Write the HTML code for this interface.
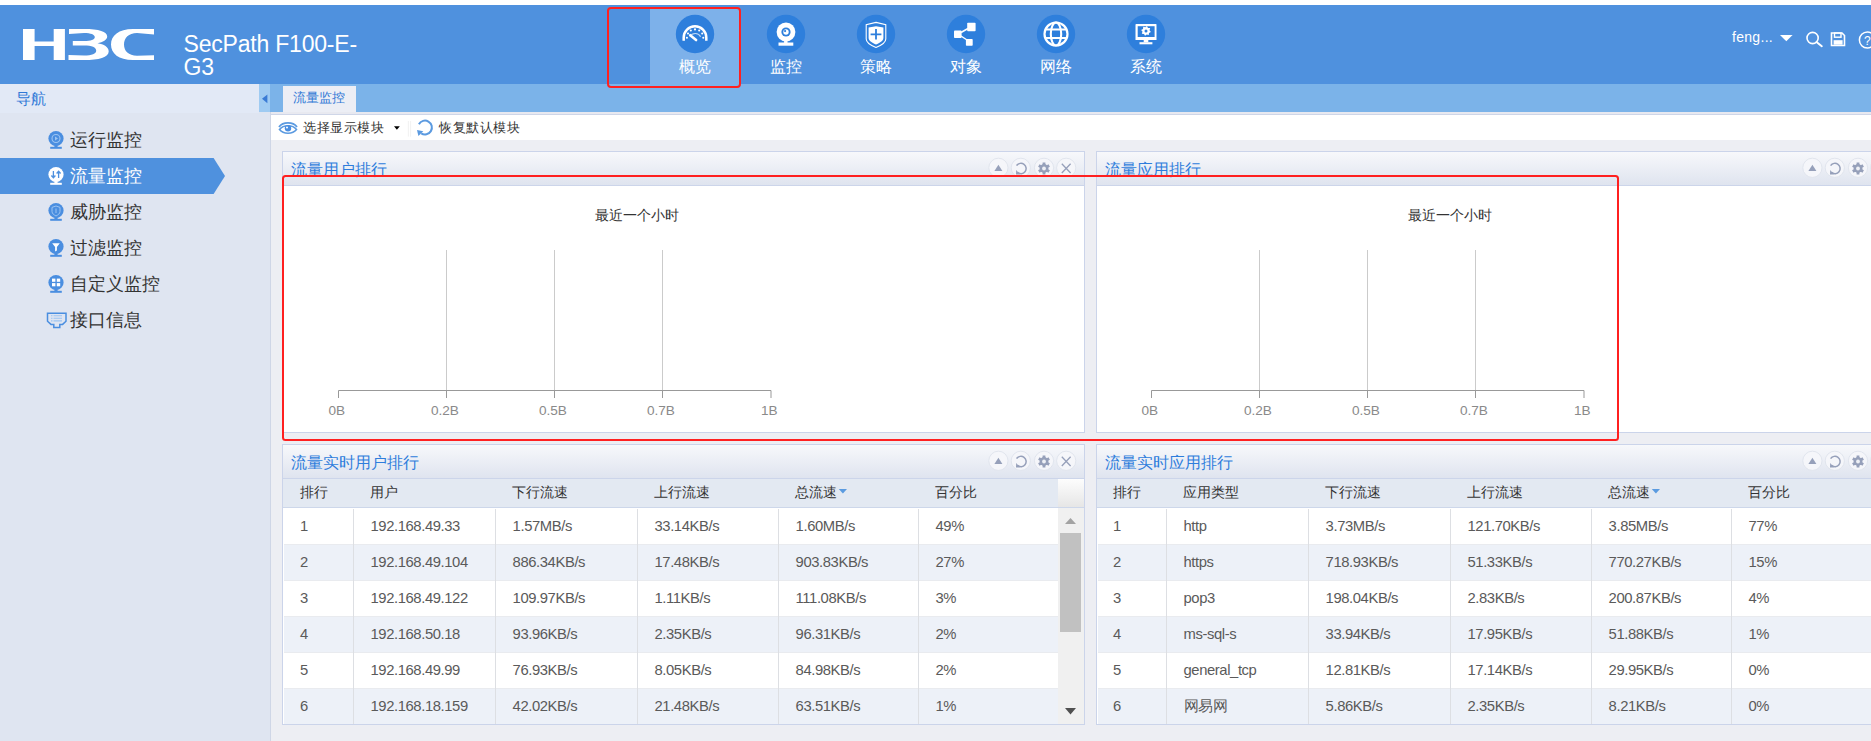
<!DOCTYPE html>
<html><head><meta charset="utf-8"><title>H3C SecPath</title>
<style>
html,body{margin:0;padding:0;}
body{width:1871px;height:741px;overflow:hidden;position:relative;background:#edeef3;font-family:'Liberation Sans', sans-serif;}
</style></head><body>
<div style="position:absolute;left:0;top:0;width:1871px;height:5px;background:#fff"></div>
<div style="position:absolute;left:0;top:5px;width:1871px;height:79px;background:#4f91de"></div>
<svg style="position:absolute;left:0;top:0" width="170" height="84" viewBox="0 0 170 84">
<g fill="#fff">
<path d="M23,29 H34.6 V41.6 H53.7 V29 H64.9 V60 H53.7 V46 H34.6 V60 H23 Z"/>
<path d="M69,29 H84 C99,29 107.2,31.5 107.2,36.6 C107.2,40 103,42.3 97.5,43.3 C104,44.3 108.7,47 108.7,51.5 C108.7,57.5 99,60 84,60 H68.5 V55 L84,55.6 C92,55.6 96.2,53.8 96.2,50.8 C96.2,47.5 92,45.6 84,45.6 H72.8 V41.1 H84 C91,41.1 94.8,39.5 94.8,37 C94.8,34.5 91,32.9 84,32.9 L69,34 Z"/>
<path d="M154,29 L133,29 C118.5,29 111,35.5 111,44.5 C111,53.5 118.5,60 133,60 L154,60 L154,55.2 L137,55.7 C128.5,55.7 124,51 124,44.5 C124,38 128.5,32.9 137,32.9 L154,34.4 Z"/>
</g></svg>
<div style="position:absolute;left:183.5px;top:33px;font-family:'Liberation Sans', sans-serif;font-size:23px;line-height:23px;color:#fff;letter-spacing:-0.2px">SecPath F100-E-<br>G3</div>
<div style="position:absolute;left:650px;top:8px;width:90px;height:76px;background:#7db1ea"></div>
<svg style="position:absolute;left:674.7px;top:14px" width="40" height="40" viewBox="-20 -20 40 40"><circle cx="0" cy="0" r="19.2" fill="#2e7fdc"/><path d="M-11.3,6.8 V3.5 A11.3,11.3 0 0 1 11.3,3.5 V6.8" fill="none" stroke="#fff" stroke-width="2.5"/>
<g fill="#fff"><circle cx="-8.1" cy="3.8" r="1.05"/><circle cx="-7" cy="-0.5" r="1.05"/><circle cx="-4.2" cy="-3.5" r="1.05"/><circle cx="0" cy="-4.6" r="1.05"/><circle cx="4.2" cy="-3.5" r="1.05"/><circle cx="7.2" cy="-0.5" r="1.05"/><circle cx="8.3" cy="3.8" r="1.05"/></g>
<path d="M1.1,6.0 L-4.8,1.2" stroke="#fff" stroke-width="2.6" stroke-linecap="round"/>
<path d="M-5,2.6 A6,6 0 0 1 5.6,2.8" fill="none" stroke="#fff" stroke-width="1.2" opacity="0.7"/></svg>
<div style="position:absolute;left:664.7px;top:58px;width:60px;text-align:center;font-family:'Liberation Sans', sans-serif;font-size:16px;line-height:18px;color:#fff">概览</div>
<svg style="position:absolute;left:765.7px;top:14px" width="40" height="40" viewBox="-20 -20 40 40"><circle cx="0" cy="0" r="19.2" fill="#2e7fdc"/><circle cx="0" cy="-2" r="9.4" fill="#fff"/><circle cx="0" cy="-2" r="4.6" fill="#2e7fdc"/><circle cx="0" cy="-2" r="2.7" fill="#fff"/><circle cx="-0.9" cy="-2.9" r="1.1" fill="#2e7fdc"/>
<rect x="-1.9" y="7" width="3.4" height="2.2" fill="#fff"/><rect x="-7.5" y="8.5" width="14.8" height="3.2" fill="#fff"/></svg>
<div style="position:absolute;left:755.7px;top:58px;width:60px;text-align:center;font-family:'Liberation Sans', sans-serif;font-size:16px;line-height:18px;color:#fff">监控</div>
<svg style="position:absolute;left:855.6px;top:14px" width="40" height="40" viewBox="-20 -20 40 40"><circle cx="0" cy="0" r="19.2" fill="#2e7fdc"/><path d="M0,-11.6 L9.8,-9.4 V5 C9.8,8.5 5,11.5 0,13.5 C-5,11.5 -9.8,8.5 -9.8,5 V-9.4 Z" fill="none" stroke="#fff" stroke-width="1.1"/>
<path d="M0,-7.8 L7.4,-6.4 V4 C7.4,6.8 3.5,9 0,10.5 C-3.5,9 -7.4,6.8 -7.4,4 V-6.4 Z" fill="#fff"/>
<path d="M0,-5 V5.6 M-5.4,0.4 H5.4" stroke="#2e7fdc" stroke-width="1.8"/></svg>
<div style="position:absolute;left:845.6px;top:58px;width:60px;text-align:center;font-family:'Liberation Sans', sans-serif;font-size:16px;line-height:18px;color:#fff">策略</div>
<svg style="position:absolute;left:945.5px;top:14px" width="40" height="40" viewBox="-20 -20 40 40"><circle cx="0" cy="0" r="19.2" fill="#2e7fdc"/><g fill="#fff"><rect x="-12" y="-3.5" width="7.6" height="7.6" rx="0.8"/><rect x="1.2" y="-11.2" width="8.4" height="8.4" rx="0.8"/><rect x="-0.1" y="4.9" width="6.8" height="6.8" rx="0.8"/></g>
<path d="M-5,-1.5 L2,-5.5 M-5,2 L1,6" stroke="#fff" stroke-width="1.5"/></svg>
<div style="position:absolute;left:935.5px;top:58px;width:60px;text-align:center;font-family:'Liberation Sans', sans-serif;font-size:16px;line-height:18px;color:#fff">对象</div>
<svg style="position:absolute;left:1035.6px;top:14px" width="40" height="40" viewBox="-20 -20 40 40"><circle cx="0" cy="0" r="19.2" fill="#2e7fdc"/><circle cx="0" cy="0" r="11.5" fill="none" stroke="#fff" stroke-width="2.2"/>
<ellipse cx="0" cy="0" rx="5.2" ry="11.5" fill="none" stroke="#fff" stroke-width="2.1"/>
<path d="M-10.5,-4.4 H10.5 M-10.5,4 H10.5" stroke="#fff" stroke-width="2"/></svg>
<div style="position:absolute;left:1025.6px;top:58px;width:60px;text-align:center;font-family:'Liberation Sans', sans-serif;font-size:16px;line-height:18px;color:#fff">网络</div>
<svg style="position:absolute;left:1125.5px;top:14px" width="40" height="40" viewBox="-20 -20 40 40"><circle cx="0" cy="0" r="19.2" fill="#2e7fdc"/><path d="M-9.5,-10 H10 A0.8,0.8 0 0 1 10.5,-9.2 V6 H-10.5 V-9.2 A0.8,0.8 0 0 1 -9.5,-10 Z" fill="#fff"/>
<rect x="-8.3" y="-7.8" width="16.9" height="10.8" fill="#2e7fdc"/>
<g transform="translate(0,-3.1)"><polygon points="0.98,-4.90 2.00,-2.99 4.16,-2.78 3.53,-0.70 4.90,0.98 2.99,2.00 2.78,4.16 0.70,3.53 -0.98,4.90 -2.00,2.99 -4.16,2.78 -3.53,0.70 -4.90,-0.98 -2.99,-2.00 -2.78,-4.16 -0.70,-3.53" fill="#fff"/><circle r="1.5" fill="#2e7fdc"/></g>
<rect x="-2.3" y="6" width="4.6" height="2.2" fill="#fff"/><rect x="-6.5" y="8.2" width="12.9" height="2.1" fill="#fff"/></svg>
<div style="position:absolute;left:1115.5px;top:58px;width:60px;text-align:center;font-family:'Liberation Sans', sans-serif;font-size:16px;line-height:18px;color:#fff">系统</div>
<div style="position:absolute;left:1732px;top:28px;font-family:'Liberation Sans', sans-serif;font-size:14px;letter-spacing:0.3px;line-height:18px;color:#fff">feng...</div>
<svg style="position:absolute;left:1770px;top:25px" width="101" height="30" viewBox="1770 25 101 30">
<path d="M1780,35 H1792.6 L1786.3,41.2 Z" fill="#fff"/>
<circle cx="1812.6" cy="38" r="5.6" fill="none" stroke="#fff" stroke-width="1.6"/>
<path d="M1816.5,42 L1821.8,46.2" stroke="#fff" stroke-width="2" stroke-linecap="round"/>
<path d="M1831.5,33 H1842 L1844.5,35.5 V45.5 H1831.5 Z" fill="none" stroke="#fff" stroke-width="1.6"/>
<rect x="1834.5" y="33" width="6.5" height="4.2" fill="none" stroke="#fff" stroke-width="1.4"/>
<rect x="1833.6" y="40.2" width="9" height="4.5" fill="#fff"/>
<circle cx="1867.4" cy="40" r="8" fill="none" stroke="#fff" stroke-width="1.5"/>
<text x="1864" y="45" font-family="Liberation Sans" font-size="12" fill="#fff">?</text>
</svg>
<div style="position:absolute;left:0;top:84px;width:270px;height:657px;background:#dfe5f1"></div>
<div style="position:absolute;left:0;top:84px;width:259px;height:28.5px;background:#e2e9f6"></div>
<div style="position:absolute;left:270px;top:84px;width:1px;height:657px;background:#cfd6e6"></div>
<div style="position:absolute;left:16px;top:90px;font-family:'Liberation Sans', sans-serif;font-size:15px;line-height:18px;color:#2f78d6">导航</div>
<div style="position:absolute;left:259px;top:84px;width:11px;height:28px;background:#9fcbf2"></div>
<svg style="position:absolute;left:259px;top:84px" width="11" height="28"><path d="M3,14.8 L8.4,10.4 V19.2 Z" fill="#3a7bd5"/></svg>
<svg style="position:absolute;left:0;top:158px" width="230" height="36"><path d="M0,0 H213.6 L225,18 L213.6,36 H0 Z" fill="#4f91de"/></svg>
<div style="position:absolute;left:70px;top:129px;font-family:'Liberation Sans', sans-serif;font-size:18px;line-height:22px;color:#333">运行监控</div>
<svg style="position:absolute;left:46px;top:130px" width="22" height="20" viewBox="-10 -10 22 20"><circle cx="0" cy="-1.5" r="7.6" fill="#4a8ee0"/><rect x="-1.6" y="5" width="3.2" height="2" fill="#4a8ee0"/><rect x="-5.8" y="6.8" width="11.6" height="2" fill="#4a8ee0"/><circle cx="0" cy="-1.5" r="4" fill="none" stroke="#9cc4f2" stroke-width="1.1"/><path d="M-1,-3.5 L2,-1.5 L-1,0.5 Z" fill="#9cc4f2"/></svg>
<div style="position:absolute;left:70px;top:165px;font-family:'Liberation Sans', sans-serif;font-size:18px;line-height:22px;color:#fff">流量监控</div>
<svg style="position:absolute;left:46px;top:166px" width="22" height="20" viewBox="-10 -10 22 20"><circle cx="0" cy="-1.5" r="7.6" fill="#fff"/><rect x="-1.6" y="5" width="3.2" height="2" fill="#fff"/><rect x="-5.8" y="6.8" width="11.6" height="2" fill="#fff"/><path d="M-2.6,-5 V1.5 M-4.6,-0.5 L-2.6,1.8 L-0.6,-0.5 M2.6,2 V-4.5 M0.6,-2.5 L2.6,-4.8 L4.6,-2.5" fill="none" stroke="#4f91de" stroke-width="1.3"/></svg>
<div style="position:absolute;left:70px;top:201px;font-family:'Liberation Sans', sans-serif;font-size:18px;line-height:22px;color:#333">威胁监控</div>
<svg style="position:absolute;left:46px;top:202px" width="22" height="20" viewBox="-10 -10 22 20"><circle cx="0" cy="-1.5" r="7.6" fill="#4a8ee0"/><rect x="-1.6" y="5" width="3.2" height="2" fill="#4a8ee0"/><rect x="-5.8" y="6.8" width="11.6" height="2" fill="#4a8ee0"/><path d="M0,-6 L4,-4.6 V-0.5 C4,1.6 2,3 0,4 C-2,3 -4,1.6 -4,-0.5 V-4.6 Z" fill="none" stroke="#9cc4f2" stroke-width="1"/><path d="M0,-3.5 V1" stroke="#9cc4f2" stroke-width="1"/></svg>
<div style="position:absolute;left:70px;top:237px;font-family:'Liberation Sans', sans-serif;font-size:18px;line-height:22px;color:#333">过滤监控</div>
<svg style="position:absolute;left:46px;top:238px" width="22" height="20" viewBox="-10 -10 22 20"><circle cx="0" cy="-1.5" r="7.6" fill="#4a8ee0"/><rect x="-1.6" y="5" width="3.2" height="2" fill="#4a8ee0"/><rect x="-5.8" y="6.8" width="11.6" height="2" fill="#4a8ee0"/><path d="M-3.8,-4.8 H3.8 L0.9,-1 V2.5 L-0.9,3.5 V-1 Z" fill="#fff"/></svg>
<div style="position:absolute;left:70px;top:273px;font-family:'Liberation Sans', sans-serif;font-size:18px;line-height:22px;color:#333">自定义监控</div>
<svg style="position:absolute;left:46px;top:274px" width="22" height="20" viewBox="-10 -10 22 20"><circle cx="0" cy="-1.5" r="7.6" fill="#4a8ee0"/><rect x="-1.6" y="5" width="3.2" height="2" fill="#4a8ee0"/><rect x="-5.8" y="6.8" width="11.6" height="2" fill="#4a8ee0"/><g fill="#fff"><rect x="-4" y="-5.4" width="3.4" height="3.2"/><rect x="0.8" y="-5.4" width="3.4" height="3.2"/><rect x="-4" y="-0.9" width="3.4" height="3.2"/><rect x="0.8" y="-0.9" width="3.4" height="3.2"/></g></svg>
<div style="position:absolute;left:70px;top:309px;font-family:'Liberation Sans', sans-serif;font-size:18px;line-height:22px;color:#333">接口信息</div>
<svg style="position:absolute;left:46px;top:310px" width="22" height="20" viewBox="-10 -10 22 20"><path d="M-8.5,-6.8 H10 V1.2 L6.6,4.4 H3.8 V7.6 H-2.2 V4.4 H-5 L-8.5,1.2 Z" fill="none" stroke="#4a8ee0" stroke-width="1.5"/><path d="M-2.5,-4.3 H6 M-2.5,-1.7 H6 M-2.5,0.9 H6" stroke="#9cc4f2" stroke-width="1.1"/><path d="M-5,-4.3 H-3.5 M-5,-1.7 H-3.5 M-5,0.9 H-3.5" stroke="#9cc4f2" stroke-width="1.1"/></svg>
<div style="position:absolute;left:270px;top:84px;width:1601px;height:28px;background:#7bb3e9"></div>
<div style="position:absolute;left:282.5px;top:85.5px;width:73.5px;height:26.5px;background:#eceef5"></div>
<div style="position:absolute;left:293px;top:89px;font-family:'Liberation Sans', sans-serif;font-size:13px;line-height:18px;color:#2f78d6">流量监控</div>
<div style="position:absolute;left:271px;top:112px;width:1600px;height:2.5px;background:linear-gradient(#e8e9f0 0,#e8e9f0 55%,#cfd6e8 60%,#cfd6e8 100%)"></div>
<div style="position:absolute;left:271px;top:114.5px;width:1600px;height:25.5px;background:#fff"></div>
<svg style="position:absolute;left:271px;top:114px" width="170" height="26" viewBox="271 114 170 26">
<path d="M279,127 C283,121.6 293,121.6 297,127" fill="none" stroke="#5b9ae0" stroke-width="1.8"/>
<path d="M279.5,129.5 C283.5,124.5 292.5,124.5 296.5,129.5 C292.5,134.5 283.5,134.5 279.5,129.5 Z" fill="none" stroke="#5b9ae0" stroke-width="1.6"/>
<circle cx="288" cy="128.3" r="3.2" fill="#4a8ee0"/><circle cx="287" cy="127.6" r="1" fill="#fff"/>
<path d="M394,126.2 H399.8 L396.9,129.8 Z" fill="#000"/>
<path d="M408.4,121 V136.6 M410.6,121 V136.6" stroke="#eee" stroke-width="0.8"/>
<path d="M418.9,124.3 A6.9,6.9 0 1 1 421.2,133.3" fill="none" stroke="#5b9ae0" stroke-width="2"/>
<path d="M417,129.9 L423.3,131.3 L418.4,136 Z" fill="#5b9ae0"/>
</svg>
<div style="position:absolute;left:303px;top:119px;font-family:'Liberation Sans', sans-serif;font-size:13.2px;letter-spacing:0.5px;line-height:18px;color:#333">选择显示模块</div>
<div style="position:absolute;left:439px;top:119px;font-family:'Liberation Sans', sans-serif;font-size:13.2px;letter-spacing:0.5px;line-height:18px;color:#333">恢复默认模块</div>
<div style="position:absolute;left:282px;top:151px;width:801px;height:280px;border:1px solid #cbd4ea;background:#fff"></div><div style="position:absolute;left:283px;top:152px;width:801px;height:33px;background:linear-gradient(#f7f8fb,#dfe4ef);border-bottom:1px solid #ccd5ea"></div><div style="position:absolute;left:291px;top:160px;font-family:'Liberation Sans', sans-serif;font-size:16px;line-height:20px;color:#2f7ddc;white-space:nowrap">流量用户排行</div><svg style="position:absolute;left:282px;top:151px" width="803" height="36" viewBox="282 151 803 36"><circle cx="998.4" cy="167.8" r="9.6" fill="#f5f6fa" stroke="#dfe3ec" stroke-width="0.9"/><circle cx="1020.8" cy="167.8" r="9.6" fill="#f5f6fa" stroke="#dfe3ec" stroke-width="0.9"/><circle cx="1044" cy="167.8" r="9.6" fill="#f5f6fa" stroke="#dfe3ec" stroke-width="0.9"/><circle cx="1066.2" cy="167.8" r="9.6" fill="#f5f6fa" stroke="#dfe3ec" stroke-width="0.9"/><path d="M994.4,171.0 H1002.4 L998.4,164.8 Z" fill="#96a0ba"/><path d="M1016.5999999999999,165.60000000000002 A5.2,5.2 0 1 1 1017.5,172.4" fill="none" stroke="#96a0ba" stroke-width="1.5"/><path d="M1016.1999999999999,170.0 L1020.0,174.4 L1016.0,174.60000000000002 Z" fill="#96a0ba"/><g fill="#96a0ba"><circle cx="1044" cy="168.5" r="4.4"/><rect x="1042.6" y="162.5" width="2.8" height="3" transform="rotate(0 1044 168.5)"/><rect x="1042.6" y="162.5" width="2.8" height="3" transform="rotate(60 1044 168.5)"/><rect x="1042.6" y="162.5" width="2.8" height="3" transform="rotate(120 1044 168.5)"/><rect x="1042.6" y="162.5" width="2.8" height="3" transform="rotate(180 1044 168.5)"/><rect x="1042.6" y="162.5" width="2.8" height="3" transform="rotate(240 1044 168.5)"/><rect x="1042.6" y="162.5" width="2.8" height="3" transform="rotate(300 1044 168.5)"/></g><circle cx="1044" cy="168.5" r="1.9" fill="#eef0f5"/><path d="M1061.8,163.8 L1070.6000000000001,173.0 M1070.6000000000001,163.8 L1061.8,173.0" stroke="#96a0ba" stroke-width="1.3"/></svg>
<div style="position:absolute;left:537.3px;top:206.5px;width:200px;text-align:center;font-family:'Liberation Sans', sans-serif;font-size:13.5px;line-height:18px;color:#333">最近一个小时</div><svg style="position:absolute;left:282px;top:240px" width="803" height="170" viewBox="282 240 803 170"><path d="M446.5,250 V390" stroke="#cbcbcb" stroke-width="1"/><path d="M554.5,250 V390" stroke="#cbcbcb" stroke-width="1"/><path d="M662.5,250 V390" stroke="#cbcbcb" stroke-width="1"/><path d="M338.5,398 V390.5 H771 V398" fill="none" stroke="#999" stroke-width="1"/><path d="M446.5,390 V398" stroke="#999" stroke-width="1"/><path d="M554.5,390 V398" stroke="#999" stroke-width="1"/><path d="M662.5,390 V398" stroke="#999" stroke-width="1"/></svg><div style="position:absolute;left:306.9px;top:402.5px;width:60px;text-align:center;font-family:'Liberation Sans', sans-serif;font-size:13.6px;line-height:16px;color:#8a8a8a">0B</div><div style="position:absolute;left:414.9px;top:402.5px;width:60px;text-align:center;font-family:'Liberation Sans', sans-serif;font-size:13.6px;line-height:16px;color:#8a8a8a">0.2B</div><div style="position:absolute;left:522.9px;top:402.5px;width:60px;text-align:center;font-family:'Liberation Sans', sans-serif;font-size:13.6px;line-height:16px;color:#8a8a8a">0.5B</div><div style="position:absolute;left:630.9px;top:402.5px;width:60px;text-align:center;font-family:'Liberation Sans', sans-serif;font-size:13.6px;line-height:16px;color:#8a8a8a">0.7B</div><div style="position:absolute;left:739.4px;top:402.5px;width:60px;text-align:center;font-family:'Liberation Sans', sans-serif;font-size:13.6px;line-height:16px;color:#8a8a8a">1B</div>
<div style="position:absolute;left:1096px;top:151px;width:801px;height:280px;border:1px solid #cbd4ea;background:#fff"></div><div style="position:absolute;left:1097px;top:152px;width:801px;height:33px;background:linear-gradient(#f7f8fb,#dfe4ef);border-bottom:1px solid #ccd5ea"></div><div style="position:absolute;left:1105px;top:160px;font-family:'Liberation Sans', sans-serif;font-size:16px;line-height:20px;color:#2f7ddc;white-space:nowrap">流量应用排行</div><svg style="position:absolute;left:1096px;top:151px" width="803" height="36" viewBox="1096 151 803 36"><circle cx="1812.4" cy="167.8" r="9.6" fill="#f5f6fa" stroke="#dfe3ec" stroke-width="0.9"/><circle cx="1834.8" cy="167.8" r="9.6" fill="#f5f6fa" stroke="#dfe3ec" stroke-width="0.9"/><circle cx="1858" cy="167.8" r="9.6" fill="#f5f6fa" stroke="#dfe3ec" stroke-width="0.9"/><circle cx="1880.2" cy="167.8" r="9.6" fill="#f5f6fa" stroke="#dfe3ec" stroke-width="0.9"/><path d="M1808.4,171.0 H1816.4 L1812.4,164.8 Z" fill="#96a0ba"/><path d="M1830.6,165.60000000000002 A5.2,5.2 0 1 1 1831.5,172.4" fill="none" stroke="#96a0ba" stroke-width="1.5"/><path d="M1830.2,170.0 L1834.0,174.4 L1830.0,174.60000000000002 Z" fill="#96a0ba"/><g fill="#96a0ba"><circle cx="1858" cy="168.5" r="4.4"/><rect x="1856.6" y="162.5" width="2.8" height="3" transform="rotate(0 1858 168.5)"/><rect x="1856.6" y="162.5" width="2.8" height="3" transform="rotate(60 1858 168.5)"/><rect x="1856.6" y="162.5" width="2.8" height="3" transform="rotate(120 1858 168.5)"/><rect x="1856.6" y="162.5" width="2.8" height="3" transform="rotate(180 1858 168.5)"/><rect x="1856.6" y="162.5" width="2.8" height="3" transform="rotate(240 1858 168.5)"/><rect x="1856.6" y="162.5" width="2.8" height="3" transform="rotate(300 1858 168.5)"/></g><circle cx="1858" cy="168.5" r="1.9" fill="#eef0f5"/><path d="M1875.8,163.8 L1884.6000000000001,173.0 M1884.6000000000001,163.8 L1875.8,173.0" stroke="#96a0ba" stroke-width="1.3"/></svg>
<div style="position:absolute;left:1350.3px;top:206.5px;width:200px;text-align:center;font-family:'Liberation Sans', sans-serif;font-size:13.5px;line-height:18px;color:#333">最近一个小时</div><svg style="position:absolute;left:1095px;top:240px" width="803" height="170" viewBox="282 240 803 170"><path d="M446.5,250 V390" stroke="#cbcbcb" stroke-width="1"/><path d="M554.5,250 V390" stroke="#cbcbcb" stroke-width="1"/><path d="M662.5,250 V390" stroke="#cbcbcb" stroke-width="1"/><path d="M338.5,398 V390.5 H771 V398" fill="none" stroke="#999" stroke-width="1"/><path d="M446.5,390 V398" stroke="#999" stroke-width="1"/><path d="M554.5,390 V398" stroke="#999" stroke-width="1"/><path d="M662.5,390 V398" stroke="#999" stroke-width="1"/></svg><div style="position:absolute;left:1119.9px;top:402.5px;width:60px;text-align:center;font-family:'Liberation Sans', sans-serif;font-size:13.6px;line-height:16px;color:#8a8a8a">0B</div><div style="position:absolute;left:1227.9px;top:402.5px;width:60px;text-align:center;font-family:'Liberation Sans', sans-serif;font-size:13.6px;line-height:16px;color:#8a8a8a">0.2B</div><div style="position:absolute;left:1335.9px;top:402.5px;width:60px;text-align:center;font-family:'Liberation Sans', sans-serif;font-size:13.6px;line-height:16px;color:#8a8a8a">0.5B</div><div style="position:absolute;left:1443.9px;top:402.5px;width:60px;text-align:center;font-family:'Liberation Sans', sans-serif;font-size:13.6px;line-height:16px;color:#8a8a8a">0.7B</div><div style="position:absolute;left:1552.4px;top:402.5px;width:60px;text-align:center;font-family:'Liberation Sans', sans-serif;font-size:13.6px;line-height:16px;color:#8a8a8a">1B</div>
<div style="position:absolute;left:282px;top:444px;width:801px;height:279px;border:1px solid #cbd4ea;background:#fff"></div><div style="position:absolute;left:283px;top:445px;width:801px;height:33px;background:linear-gradient(#f7f8fb,#dfe4ef);border-bottom:1px solid #ccd5ea"></div><div style="position:absolute;left:291px;top:453px;font-family:'Liberation Sans', sans-serif;font-size:16px;line-height:20px;color:#2f7ddc;white-space:nowrap">流量实时用户排行</div><svg style="position:absolute;left:282px;top:444px" width="803" height="36" viewBox="282 444 803 36"><circle cx="998.4" cy="460.8" r="9.6" fill="#f5f6fa" stroke="#dfe3ec" stroke-width="0.9"/><circle cx="1020.8" cy="460.8" r="9.6" fill="#f5f6fa" stroke="#dfe3ec" stroke-width="0.9"/><circle cx="1044" cy="460.8" r="9.6" fill="#f5f6fa" stroke="#dfe3ec" stroke-width="0.9"/><circle cx="1066.2" cy="460.8" r="9.6" fill="#f5f6fa" stroke="#dfe3ec" stroke-width="0.9"/><path d="M994.4,464.0 H1002.4 L998.4,457.8 Z" fill="#96a0ba"/><path d="M1016.5999999999999,458.6 A5.2,5.2 0 1 1 1017.5,465.40000000000003" fill="none" stroke="#96a0ba" stroke-width="1.5"/><path d="M1016.1999999999999,463.0 L1020.0,467.40000000000003 L1016.0,467.6 Z" fill="#96a0ba"/><g fill="#96a0ba"><circle cx="1044" cy="461.5" r="4.4"/><rect x="1042.6" y="455.5" width="2.8" height="3" transform="rotate(0 1044 461.5)"/><rect x="1042.6" y="455.5" width="2.8" height="3" transform="rotate(60 1044 461.5)"/><rect x="1042.6" y="455.5" width="2.8" height="3" transform="rotate(120 1044 461.5)"/><rect x="1042.6" y="455.5" width="2.8" height="3" transform="rotate(180 1044 461.5)"/><rect x="1042.6" y="455.5" width="2.8" height="3" transform="rotate(240 1044 461.5)"/><rect x="1042.6" y="455.5" width="2.8" height="3" transform="rotate(300 1044 461.5)"/></g><circle cx="1044" cy="461.5" r="1.9" fill="#eef0f5"/><path d="M1061.8,456.8 L1070.6000000000001,466.0 M1070.6000000000001,456.8 L1061.8,466.0" stroke="#96a0ba" stroke-width="1.3"/></svg><div style="position:absolute;left:283px;top:478.5px;width:801px;height:28.5px;background:#e3e9f2;border-bottom:1px solid #cdd7ea"></div><div style="position:absolute;left:299.5px;top:484px;font-family:'Liberation Sans', sans-serif;font-size:13.5px;line-height:18px;color:#333;white-space:nowrap">排行</div><div style="position:absolute;left:370.0px;top:484px;font-family:'Liberation Sans', sans-serif;font-size:13.5px;line-height:18px;color:#333;white-space:nowrap">用户</div><div style="position:absolute;left:512.1px;top:484px;font-family:'Liberation Sans', sans-serif;font-size:13.5px;line-height:18px;color:#333;white-space:nowrap">下行流速</div><div style="position:absolute;left:654.0px;top:484px;font-family:'Liberation Sans', sans-serif;font-size:13.5px;line-height:18px;color:#333;white-space:nowrap">上行流速</div><div style="position:absolute;left:795.1px;top:484px;font-family:'Liberation Sans', sans-serif;font-size:13.5px;line-height:18px;color:#333;white-space:nowrap">总流速</div><div style="position:absolute;left:935.0px;top:484px;font-family:'Liberation Sans', sans-serif;font-size:13.5px;line-height:18px;color:#333;white-space:nowrap">百分比</div><svg style="position:absolute;left:836px;top:486px" width="14" height="10"><path d="M2.8,3 H11 L6.9,7.6 Z" fill="#5b9be0"/></svg><div style="position:absolute;left:284px;top:508px;width:774px;height:36px;background:#ffffff"></div><div style="position:absolute;left:300px;top:516.5px;font-family:'Liberation Sans', sans-serif;font-size:14.8px;letter-spacing:-0.4px;line-height:18px;color:#5a5a5a;white-space:nowrap">1</div><div style="position:absolute;left:370.5px;top:516.5px;font-family:'Liberation Sans', sans-serif;font-size:14.8px;letter-spacing:-0.4px;line-height:18px;color:#5a5a5a;white-space:nowrap">192.168.49.33</div><div style="position:absolute;left:512.6px;top:516.5px;font-family:'Liberation Sans', sans-serif;font-size:14.8px;letter-spacing:-0.4px;line-height:18px;color:#5a5a5a;white-space:nowrap">1.57MB/s</div><div style="position:absolute;left:654.5px;top:516.5px;font-family:'Liberation Sans', sans-serif;font-size:14.8px;letter-spacing:-0.4px;line-height:18px;color:#5a5a5a;white-space:nowrap">33.14KB/s</div><div style="position:absolute;left:795.6px;top:516.5px;font-family:'Liberation Sans', sans-serif;font-size:14.8px;letter-spacing:-0.4px;line-height:18px;color:#5a5a5a;white-space:nowrap">1.60MB/s</div><div style="position:absolute;left:935.5px;top:516.5px;font-family:'Liberation Sans', sans-serif;font-size:14.8px;letter-spacing:-0.4px;line-height:18px;color:#5a5a5a;white-space:nowrap">49%</div><div style="position:absolute;left:284px;top:544px;width:774px;height:36px;background:#edf1f8"></div><div style="position:absolute;left:284px;top:543.5px;width:774px;height:1px;background:#e9ebef"></div><div style="position:absolute;left:300px;top:552.5px;font-family:'Liberation Sans', sans-serif;font-size:14.8px;letter-spacing:-0.4px;line-height:18px;color:#5a5a5a;white-space:nowrap">2</div><div style="position:absolute;left:370.5px;top:552.5px;font-family:'Liberation Sans', sans-serif;font-size:14.8px;letter-spacing:-0.4px;line-height:18px;color:#5a5a5a;white-space:nowrap">192.168.49.104</div><div style="position:absolute;left:512.6px;top:552.5px;font-family:'Liberation Sans', sans-serif;font-size:14.8px;letter-spacing:-0.4px;line-height:18px;color:#5a5a5a;white-space:nowrap">886.34KB/s</div><div style="position:absolute;left:654.5px;top:552.5px;font-family:'Liberation Sans', sans-serif;font-size:14.8px;letter-spacing:-0.4px;line-height:18px;color:#5a5a5a;white-space:nowrap">17.48KB/s</div><div style="position:absolute;left:795.6px;top:552.5px;font-family:'Liberation Sans', sans-serif;font-size:14.8px;letter-spacing:-0.4px;line-height:18px;color:#5a5a5a;white-space:nowrap">903.83KB/s</div><div style="position:absolute;left:935.5px;top:552.5px;font-family:'Liberation Sans', sans-serif;font-size:14.8px;letter-spacing:-0.4px;line-height:18px;color:#5a5a5a;white-space:nowrap">27%</div><div style="position:absolute;left:284px;top:580px;width:774px;height:36px;background:#ffffff"></div><div style="position:absolute;left:284px;top:579.5px;width:774px;height:1px;background:#e9ebef"></div><div style="position:absolute;left:300px;top:588.5px;font-family:'Liberation Sans', sans-serif;font-size:14.8px;letter-spacing:-0.4px;line-height:18px;color:#5a5a5a;white-space:nowrap">3</div><div style="position:absolute;left:370.5px;top:588.5px;font-family:'Liberation Sans', sans-serif;font-size:14.8px;letter-spacing:-0.4px;line-height:18px;color:#5a5a5a;white-space:nowrap">192.168.49.122</div><div style="position:absolute;left:512.6px;top:588.5px;font-family:'Liberation Sans', sans-serif;font-size:14.8px;letter-spacing:-0.4px;line-height:18px;color:#5a5a5a;white-space:nowrap">109.97KB/s</div><div style="position:absolute;left:654.5px;top:588.5px;font-family:'Liberation Sans', sans-serif;font-size:14.8px;letter-spacing:-0.4px;line-height:18px;color:#5a5a5a;white-space:nowrap">1.11KB/s</div><div style="position:absolute;left:795.6px;top:588.5px;font-family:'Liberation Sans', sans-serif;font-size:14.8px;letter-spacing:-0.4px;line-height:18px;color:#5a5a5a;white-space:nowrap">111.08KB/s</div><div style="position:absolute;left:935.5px;top:588.5px;font-family:'Liberation Sans', sans-serif;font-size:14.8px;letter-spacing:-0.4px;line-height:18px;color:#5a5a5a;white-space:nowrap">3%</div><div style="position:absolute;left:284px;top:616px;width:774px;height:36px;background:#edf1f8"></div><div style="position:absolute;left:284px;top:615.5px;width:774px;height:1px;background:#e9ebef"></div><div style="position:absolute;left:300px;top:624.5px;font-family:'Liberation Sans', sans-serif;font-size:14.8px;letter-spacing:-0.4px;line-height:18px;color:#5a5a5a;white-space:nowrap">4</div><div style="position:absolute;left:370.5px;top:624.5px;font-family:'Liberation Sans', sans-serif;font-size:14.8px;letter-spacing:-0.4px;line-height:18px;color:#5a5a5a;white-space:nowrap">192.168.50.18</div><div style="position:absolute;left:512.6px;top:624.5px;font-family:'Liberation Sans', sans-serif;font-size:14.8px;letter-spacing:-0.4px;line-height:18px;color:#5a5a5a;white-space:nowrap">93.96KB/s</div><div style="position:absolute;left:654.5px;top:624.5px;font-family:'Liberation Sans', sans-serif;font-size:14.8px;letter-spacing:-0.4px;line-height:18px;color:#5a5a5a;white-space:nowrap">2.35KB/s</div><div style="position:absolute;left:795.6px;top:624.5px;font-family:'Liberation Sans', sans-serif;font-size:14.8px;letter-spacing:-0.4px;line-height:18px;color:#5a5a5a;white-space:nowrap">96.31KB/s</div><div style="position:absolute;left:935.5px;top:624.5px;font-family:'Liberation Sans', sans-serif;font-size:14.8px;letter-spacing:-0.4px;line-height:18px;color:#5a5a5a;white-space:nowrap">2%</div><div style="position:absolute;left:284px;top:652px;width:774px;height:36px;background:#ffffff"></div><div style="position:absolute;left:284px;top:651.5px;width:774px;height:1px;background:#e9ebef"></div><div style="position:absolute;left:300px;top:660.5px;font-family:'Liberation Sans', sans-serif;font-size:14.8px;letter-spacing:-0.4px;line-height:18px;color:#5a5a5a;white-space:nowrap">5</div><div style="position:absolute;left:370.5px;top:660.5px;font-family:'Liberation Sans', sans-serif;font-size:14.8px;letter-spacing:-0.4px;line-height:18px;color:#5a5a5a;white-space:nowrap">192.168.49.99</div><div style="position:absolute;left:512.6px;top:660.5px;font-family:'Liberation Sans', sans-serif;font-size:14.8px;letter-spacing:-0.4px;line-height:18px;color:#5a5a5a;white-space:nowrap">76.93KB/s</div><div style="position:absolute;left:654.5px;top:660.5px;font-family:'Liberation Sans', sans-serif;font-size:14.8px;letter-spacing:-0.4px;line-height:18px;color:#5a5a5a;white-space:nowrap">8.05KB/s</div><div style="position:absolute;left:795.6px;top:660.5px;font-family:'Liberation Sans', sans-serif;font-size:14.8px;letter-spacing:-0.4px;line-height:18px;color:#5a5a5a;white-space:nowrap">84.98KB/s</div><div style="position:absolute;left:935.5px;top:660.5px;font-family:'Liberation Sans', sans-serif;font-size:14.8px;letter-spacing:-0.4px;line-height:18px;color:#5a5a5a;white-space:nowrap">2%</div><div style="position:absolute;left:284px;top:688px;width:774px;height:36px;background:#edf1f8"></div><div style="position:absolute;left:284px;top:687.5px;width:774px;height:1px;background:#e9ebef"></div><div style="position:absolute;left:300px;top:696.5px;font-family:'Liberation Sans', sans-serif;font-size:14.8px;letter-spacing:-0.4px;line-height:18px;color:#5a5a5a;white-space:nowrap">6</div><div style="position:absolute;left:370.5px;top:696.5px;font-family:'Liberation Sans', sans-serif;font-size:14.8px;letter-spacing:-0.4px;line-height:18px;color:#5a5a5a;white-space:nowrap">192.168.18.159</div><div style="position:absolute;left:512.6px;top:696.5px;font-family:'Liberation Sans', sans-serif;font-size:14.8px;letter-spacing:-0.4px;line-height:18px;color:#5a5a5a;white-space:nowrap">42.02KB/s</div><div style="position:absolute;left:654.5px;top:696.5px;font-family:'Liberation Sans', sans-serif;font-size:14.8px;letter-spacing:-0.4px;line-height:18px;color:#5a5a5a;white-space:nowrap">21.48KB/s</div><div style="position:absolute;left:795.6px;top:696.5px;font-family:'Liberation Sans', sans-serif;font-size:14.8px;letter-spacing:-0.4px;line-height:18px;color:#5a5a5a;white-space:nowrap">63.51KB/s</div><div style="position:absolute;left:935.5px;top:696.5px;font-family:'Liberation Sans', sans-serif;font-size:14.8px;letter-spacing:-0.4px;line-height:18px;color:#5a5a5a;white-space:nowrap">1%</div><div style="position:absolute;left:353.0px;top:509px;width:1px;height:215px;background:#dddfe3"></div><div style="position:absolute;left:495.1px;top:509px;width:1px;height:215px;background:#dddfe3"></div><div style="position:absolute;left:637.0px;top:509px;width:1px;height:215px;background:#dddfe3"></div><div style="position:absolute;left:778.1px;top:509px;width:1px;height:215px;background:#dddfe3"></div><div style="position:absolute;left:918.0px;top:509px;width:1px;height:215px;background:#dddfe3"></div><div style="position:absolute;left:1058px;top:508px;width:25.5px;height:216px;background:#f0f0f0"></div><div style="position:absolute;left:1058px;top:479px;width:25.5px;height:28px;background:linear-gradient(#fdfdfd,#e6e6e6)"></div><div style="position:absolute;left:1060px;top:533px;width:21px;height:99px;background:#c1c1c1"></div><svg style="position:absolute;left:1058px;top:508px" width="26" height="216" viewBox="1058 508 26 216"><path d="M1065,523.9 H1076 L1070.5,518 Z" fill="#a3a3a3"/><path d="M1065,708 H1076 L1070.5,714.4 Z" fill="#505050"/></svg>
<div style="position:absolute;left:1096px;top:444px;width:801px;height:279px;border:1px solid #cbd4ea;background:#fff"></div><div style="position:absolute;left:1097px;top:445px;width:801px;height:33px;background:linear-gradient(#f7f8fb,#dfe4ef);border-bottom:1px solid #ccd5ea"></div><div style="position:absolute;left:1105px;top:453px;font-family:'Liberation Sans', sans-serif;font-size:16px;line-height:20px;color:#2f7ddc;white-space:nowrap">流量实时应用排行</div><svg style="position:absolute;left:1096px;top:444px" width="803" height="36" viewBox="1096 444 803 36"><circle cx="1812.4" cy="460.8" r="9.6" fill="#f5f6fa" stroke="#dfe3ec" stroke-width="0.9"/><circle cx="1834.8" cy="460.8" r="9.6" fill="#f5f6fa" stroke="#dfe3ec" stroke-width="0.9"/><circle cx="1858" cy="460.8" r="9.6" fill="#f5f6fa" stroke="#dfe3ec" stroke-width="0.9"/><circle cx="1880.2" cy="460.8" r="9.6" fill="#f5f6fa" stroke="#dfe3ec" stroke-width="0.9"/><path d="M1808.4,464.0 H1816.4 L1812.4,457.8 Z" fill="#96a0ba"/><path d="M1830.6,458.6 A5.2,5.2 0 1 1 1831.5,465.40000000000003" fill="none" stroke="#96a0ba" stroke-width="1.5"/><path d="M1830.2,463.0 L1834.0,467.40000000000003 L1830.0,467.6 Z" fill="#96a0ba"/><g fill="#96a0ba"><circle cx="1858" cy="461.5" r="4.4"/><rect x="1856.6" y="455.5" width="2.8" height="3" transform="rotate(0 1858 461.5)"/><rect x="1856.6" y="455.5" width="2.8" height="3" transform="rotate(60 1858 461.5)"/><rect x="1856.6" y="455.5" width="2.8" height="3" transform="rotate(120 1858 461.5)"/><rect x="1856.6" y="455.5" width="2.8" height="3" transform="rotate(180 1858 461.5)"/><rect x="1856.6" y="455.5" width="2.8" height="3" transform="rotate(240 1858 461.5)"/><rect x="1856.6" y="455.5" width="2.8" height="3" transform="rotate(300 1858 461.5)"/></g><circle cx="1858" cy="461.5" r="1.9" fill="#eef0f5"/><path d="M1875.8,456.8 L1884.6000000000001,466.0 M1884.6000000000001,456.8 L1875.8,466.0" stroke="#96a0ba" stroke-width="1.3"/></svg><div style="position:absolute;left:1097px;top:478.5px;width:801px;height:28.5px;background:#e3e9f2;border-bottom:1px solid #cdd7ea"></div><div style="position:absolute;left:1112.5px;top:484px;font-family:'Liberation Sans', sans-serif;font-size:13.5px;line-height:18px;color:#333;white-space:nowrap">排行</div><div style="position:absolute;left:1183.0px;top:484px;font-family:'Liberation Sans', sans-serif;font-size:13.5px;line-height:18px;color:#333;white-space:nowrap">应用类型</div><div style="position:absolute;left:1325.1px;top:484px;font-family:'Liberation Sans', sans-serif;font-size:13.5px;line-height:18px;color:#333;white-space:nowrap">下行流速</div><div style="position:absolute;left:1467.0px;top:484px;font-family:'Liberation Sans', sans-serif;font-size:13.5px;line-height:18px;color:#333;white-space:nowrap">上行流速</div><div style="position:absolute;left:1608.1px;top:484px;font-family:'Liberation Sans', sans-serif;font-size:13.5px;line-height:18px;color:#333;white-space:nowrap">总流速</div><div style="position:absolute;left:1748.0px;top:484px;font-family:'Liberation Sans', sans-serif;font-size:13.5px;line-height:18px;color:#333;white-space:nowrap">百分比</div><svg style="position:absolute;left:1649px;top:486px" width="14" height="10"><path d="M2.8,3 H11 L6.9,7.6 Z" fill="#5b9be0"/></svg><div style="position:absolute;left:1098px;top:508px;width:800px;height:36px;background:#ffffff"></div><div style="position:absolute;left:1113px;top:516.5px;font-family:'Liberation Sans', sans-serif;font-size:14.8px;letter-spacing:-0.4px;line-height:18px;color:#5a5a5a;white-space:nowrap">1</div><div style="position:absolute;left:1183.5px;top:516.5px;font-family:'Liberation Sans', sans-serif;font-size:14.8px;letter-spacing:-0.4px;line-height:18px;color:#5a5a5a;white-space:nowrap">http</div><div style="position:absolute;left:1325.6px;top:516.5px;font-family:'Liberation Sans', sans-serif;font-size:14.8px;letter-spacing:-0.4px;line-height:18px;color:#5a5a5a;white-space:nowrap">3.73MB/s</div><div style="position:absolute;left:1467.5px;top:516.5px;font-family:'Liberation Sans', sans-serif;font-size:14.8px;letter-spacing:-0.4px;line-height:18px;color:#5a5a5a;white-space:nowrap">121.70KB/s</div><div style="position:absolute;left:1608.6px;top:516.5px;font-family:'Liberation Sans', sans-serif;font-size:14.8px;letter-spacing:-0.4px;line-height:18px;color:#5a5a5a;white-space:nowrap">3.85MB/s</div><div style="position:absolute;left:1748.5px;top:516.5px;font-family:'Liberation Sans', sans-serif;font-size:14.8px;letter-spacing:-0.4px;line-height:18px;color:#5a5a5a;white-space:nowrap">77%</div><div style="position:absolute;left:1098px;top:544px;width:800px;height:36px;background:#edf1f8"></div><div style="position:absolute;left:1098px;top:543.5px;width:800px;height:1px;background:#e9ebef"></div><div style="position:absolute;left:1113px;top:552.5px;font-family:'Liberation Sans', sans-serif;font-size:14.8px;letter-spacing:-0.4px;line-height:18px;color:#5a5a5a;white-space:nowrap">2</div><div style="position:absolute;left:1183.5px;top:552.5px;font-family:'Liberation Sans', sans-serif;font-size:14.8px;letter-spacing:-0.4px;line-height:18px;color:#5a5a5a;white-space:nowrap">https</div><div style="position:absolute;left:1325.6px;top:552.5px;font-family:'Liberation Sans', sans-serif;font-size:14.8px;letter-spacing:-0.4px;line-height:18px;color:#5a5a5a;white-space:nowrap">718.93KB/s</div><div style="position:absolute;left:1467.5px;top:552.5px;font-family:'Liberation Sans', sans-serif;font-size:14.8px;letter-spacing:-0.4px;line-height:18px;color:#5a5a5a;white-space:nowrap">51.33KB/s</div><div style="position:absolute;left:1608.6px;top:552.5px;font-family:'Liberation Sans', sans-serif;font-size:14.8px;letter-spacing:-0.4px;line-height:18px;color:#5a5a5a;white-space:nowrap">770.27KB/s</div><div style="position:absolute;left:1748.5px;top:552.5px;font-family:'Liberation Sans', sans-serif;font-size:14.8px;letter-spacing:-0.4px;line-height:18px;color:#5a5a5a;white-space:nowrap">15%</div><div style="position:absolute;left:1098px;top:580px;width:800px;height:36px;background:#ffffff"></div><div style="position:absolute;left:1098px;top:579.5px;width:800px;height:1px;background:#e9ebef"></div><div style="position:absolute;left:1113px;top:588.5px;font-family:'Liberation Sans', sans-serif;font-size:14.8px;letter-spacing:-0.4px;line-height:18px;color:#5a5a5a;white-space:nowrap">3</div><div style="position:absolute;left:1183.5px;top:588.5px;font-family:'Liberation Sans', sans-serif;font-size:14.8px;letter-spacing:-0.4px;line-height:18px;color:#5a5a5a;white-space:nowrap">pop3</div><div style="position:absolute;left:1325.6px;top:588.5px;font-family:'Liberation Sans', sans-serif;font-size:14.8px;letter-spacing:-0.4px;line-height:18px;color:#5a5a5a;white-space:nowrap">198.04KB/s</div><div style="position:absolute;left:1467.5px;top:588.5px;font-family:'Liberation Sans', sans-serif;font-size:14.8px;letter-spacing:-0.4px;line-height:18px;color:#5a5a5a;white-space:nowrap">2.83KB/s</div><div style="position:absolute;left:1608.6px;top:588.5px;font-family:'Liberation Sans', sans-serif;font-size:14.8px;letter-spacing:-0.4px;line-height:18px;color:#5a5a5a;white-space:nowrap">200.87KB/s</div><div style="position:absolute;left:1748.5px;top:588.5px;font-family:'Liberation Sans', sans-serif;font-size:14.8px;letter-spacing:-0.4px;line-height:18px;color:#5a5a5a;white-space:nowrap">4%</div><div style="position:absolute;left:1098px;top:616px;width:800px;height:36px;background:#edf1f8"></div><div style="position:absolute;left:1098px;top:615.5px;width:800px;height:1px;background:#e9ebef"></div><div style="position:absolute;left:1113px;top:624.5px;font-family:'Liberation Sans', sans-serif;font-size:14.8px;letter-spacing:-0.4px;line-height:18px;color:#5a5a5a;white-space:nowrap">4</div><div style="position:absolute;left:1183.5px;top:624.5px;font-family:'Liberation Sans', sans-serif;font-size:14.8px;letter-spacing:-0.4px;line-height:18px;color:#5a5a5a;white-space:nowrap">ms-sql-s</div><div style="position:absolute;left:1325.6px;top:624.5px;font-family:'Liberation Sans', sans-serif;font-size:14.8px;letter-spacing:-0.4px;line-height:18px;color:#5a5a5a;white-space:nowrap">33.94KB/s</div><div style="position:absolute;left:1467.5px;top:624.5px;font-family:'Liberation Sans', sans-serif;font-size:14.8px;letter-spacing:-0.4px;line-height:18px;color:#5a5a5a;white-space:nowrap">17.95KB/s</div><div style="position:absolute;left:1608.6px;top:624.5px;font-family:'Liberation Sans', sans-serif;font-size:14.8px;letter-spacing:-0.4px;line-height:18px;color:#5a5a5a;white-space:nowrap">51.88KB/s</div><div style="position:absolute;left:1748.5px;top:624.5px;font-family:'Liberation Sans', sans-serif;font-size:14.8px;letter-spacing:-0.4px;line-height:18px;color:#5a5a5a;white-space:nowrap">1%</div><div style="position:absolute;left:1098px;top:652px;width:800px;height:36px;background:#ffffff"></div><div style="position:absolute;left:1098px;top:651.5px;width:800px;height:1px;background:#e9ebef"></div><div style="position:absolute;left:1113px;top:660.5px;font-family:'Liberation Sans', sans-serif;font-size:14.8px;letter-spacing:-0.4px;line-height:18px;color:#5a5a5a;white-space:nowrap">5</div><div style="position:absolute;left:1183.5px;top:660.5px;font-family:'Liberation Sans', sans-serif;font-size:14.8px;letter-spacing:-0.4px;line-height:18px;color:#5a5a5a;white-space:nowrap">general_tcp</div><div style="position:absolute;left:1325.6px;top:660.5px;font-family:'Liberation Sans', sans-serif;font-size:14.8px;letter-spacing:-0.4px;line-height:18px;color:#5a5a5a;white-space:nowrap">12.81KB/s</div><div style="position:absolute;left:1467.5px;top:660.5px;font-family:'Liberation Sans', sans-serif;font-size:14.8px;letter-spacing:-0.4px;line-height:18px;color:#5a5a5a;white-space:nowrap">17.14KB/s</div><div style="position:absolute;left:1608.6px;top:660.5px;font-family:'Liberation Sans', sans-serif;font-size:14.8px;letter-spacing:-0.4px;line-height:18px;color:#5a5a5a;white-space:nowrap">29.95KB/s</div><div style="position:absolute;left:1748.5px;top:660.5px;font-family:'Liberation Sans', sans-serif;font-size:14.8px;letter-spacing:-0.4px;line-height:18px;color:#5a5a5a;white-space:nowrap">0%</div><div style="position:absolute;left:1098px;top:688px;width:800px;height:36px;background:#edf1f8"></div><div style="position:absolute;left:1098px;top:687.5px;width:800px;height:1px;background:#e9ebef"></div><div style="position:absolute;left:1113px;top:696.5px;font-family:'Liberation Sans', sans-serif;font-size:14.8px;letter-spacing:-0.4px;line-height:18px;color:#5a5a5a;white-space:nowrap">6</div><div style="position:absolute;left:1183.5px;top:696.5px;font-family:'Liberation Sans', sans-serif;font-size:14.8px;letter-spacing:-0.4px;line-height:18px;color:#5a5a5a;white-space:nowrap">网易网</div><div style="position:absolute;left:1325.6px;top:696.5px;font-family:'Liberation Sans', sans-serif;font-size:14.8px;letter-spacing:-0.4px;line-height:18px;color:#5a5a5a;white-space:nowrap">5.86KB/s</div><div style="position:absolute;left:1467.5px;top:696.5px;font-family:'Liberation Sans', sans-serif;font-size:14.8px;letter-spacing:-0.4px;line-height:18px;color:#5a5a5a;white-space:nowrap">2.35KB/s</div><div style="position:absolute;left:1608.6px;top:696.5px;font-family:'Liberation Sans', sans-serif;font-size:14.8px;letter-spacing:-0.4px;line-height:18px;color:#5a5a5a;white-space:nowrap">8.21KB/s</div><div style="position:absolute;left:1748.5px;top:696.5px;font-family:'Liberation Sans', sans-serif;font-size:14.8px;letter-spacing:-0.4px;line-height:18px;color:#5a5a5a;white-space:nowrap">0%</div><div style="position:absolute;left:1166.0px;top:509px;width:1px;height:215px;background:#dddfe3"></div><div style="position:absolute;left:1308.1px;top:509px;width:1px;height:215px;background:#dddfe3"></div><div style="position:absolute;left:1450.0px;top:509px;width:1px;height:215px;background:#dddfe3"></div><div style="position:absolute;left:1591.1px;top:509px;width:1px;height:215px;background:#dddfe3"></div><div style="position:absolute;left:1731.0px;top:509px;width:1px;height:215px;background:#dddfe3"></div>
<div style="position:absolute;left:607.2px;top:7.2px;width:129.5px;height:76.6px;border:2.6px solid #ff2020;border-radius:4px"></div>
<div style="position:absolute;left:282.3px;top:175.4px;width:1332.3px;height:262px;border:2.6px solid #ff2020;border-radius:3.5px"></div>
</body></html>
